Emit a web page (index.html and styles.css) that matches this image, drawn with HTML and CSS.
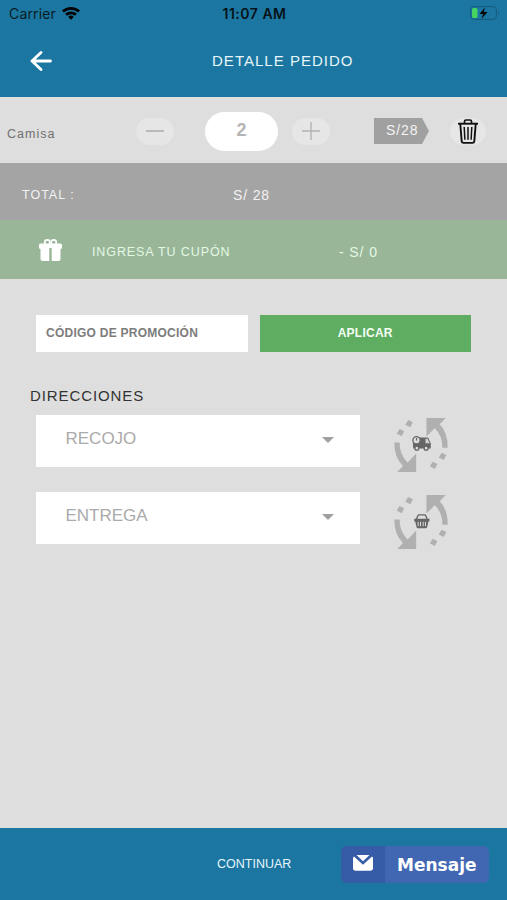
FILE: index.html
```html
<!DOCTYPE html>
<html lang="es">
<head>
<meta charset="utf-8">
<title>Detalle pedido</title>
<link rel="stylesheet" href="styles.css">
</head>
<body>
<div class="screen">
  <header class="header">
    <div class="status">
      <span class="carrier">Carrier
        <svg class="wifi" viewBox="0 0 18 14"><path d="M0 4.600A13 13 0 0 1 18 4.600L16.100 6.600A10.300 10.300 0 0 0 1.900 6.600ZM3.100 7.800A8.600 8.600 0 0 1 14.900 7.800L12.900 9.800A5.800 5.800 0 0 0 5.100 9.800ZM6.200 10.900A4 4 0 0 1 11.800 10.900L9 13.700Z"/></svg>
      </span>
      <span class="time">11:07 AM</span>
      <svg class="battery" viewBox="0 0 30 14"><rect x=".6" y=".6" width="25.800" height="12.800" rx="3.500" fill="none" stroke="#155a7b" stroke-width="1"/><path d="M28 5v4q2-2 0-4" fill="#155a7b"/><rect x="2" y="2" width="5.500" height="10" rx="1.500" fill="#46d35f"/><path d="M15 1.500 9.500 8h3.600l-1.500 4.800L17.500 6h-3.800z" fill="#000"/></svg>
    </div>
    <div class="nav">
      <svg class="back" viewBox="0 0 22 20"><path d="M20.500 10H2M11 1.500 2 10l9 8.500" fill="none" stroke="#fff" stroke-width="2.800" stroke-linecap="round" stroke-linejoin="round"/></svg>
      <h1>DETALLE PEDIDO</h1>
    </div>
  </header>

  <section class="item">
    <span class="name">Camisa</span>
    <button class="round" aria-label="Menos"><svg viewBox="0 0 18 18"><path d="M0 9h18" stroke="#afafaf" stroke-width="1.600"/></svg></button>
    <span class="qty">2</span>
    <button class="round" aria-label="Más"><svg viewBox="0 0 18 18"><path d="M0 9h18M9 0v18" stroke="#b3b3b3" stroke-width="1.400"/></svg></button>
    <span class="price">S/28</span>
    <button class="round trash" aria-label="Eliminar"><svg viewBox="0 0 20 25"><g fill="none" stroke="#111" stroke-linejoin="round"><path d="M0 4.700h20" stroke-width="1.900"/><path d="M6.500 4V2.400Q6.500 1 8 1h4q1.500 0 1.500 1.400V4" stroke-width="1.700"/><path d="M2.300 5l1.400 17.300q.2 1.600 1.800 1.600h9q1.600 0 1.800-1.600L17.700 5" stroke-width="1.900"/><path d="M6.200 8l.7 12.800M10 8v12.800M13.800 8l-.7 12.800" stroke-width="1.500"/></g></svg></button>
  </section>

  <section class="total"><span>TOTAL :</span><span>S/ 28</span></section>

  <section class="coupon">
    <svg class="gift" viewBox="0 0 23 22"><path d="M1.500 4.500H21.500Q23 4.500 23 6V8.500Q23 10 21.500 10V20Q21.500 22 19.500 22H12.700V9H10.300V22H3.500Q1.500 22 1.500 20V10Q0 10 0 8.500V6Q0 4.500 1.500 4.500Z" fill="#fff"/><g fill="none" stroke="#fff" stroke-width="1.700"><circle cx="8.300" cy="3.500" r="2.600"/><circle cx="14.700" cy="3.500" r="2.600"/></g></svg>
    <span>INGRESA TU CUPÓN</span><span>- S/ 0</span>
  </section>

  <main class="main">
    <div class="promo">
      <div class="code">CÓDIGO DE PROMOCIÓN</div>
      <button class="apply">APLICAR</button>
    </div>
    <h2>DIRECCIONES</h2>
    <div class="address">
      <div class="select"><span>RECOJO</span><i class="caret"></i></div>
      <svg class="cycle" viewBox="421 353 163 163">
        <g fill="#b0b0b0"><path d="M519 353H577L559 372Q584 398 583 443H567Q568 407 544 384L519 409Z"/><path d="M488 516H431L448 498Q421 471 422 427H438Q437 463 462 487L488 460Z"/><path d="M464 359l14 7-8 15-15-8zM438 386l14 7-8 15-15-8zM565 458l14 7-8 15-15-8zM538 485l14 7-8 15-15-8z"/></g>
        <path d="M478 426L498 412H524L532 430V445H479Z" fill="#666"/><path d="M516 416h6l7 13h-13z" fill="#d2d2d2"/><g fill="#ddd" stroke="#666" stroke-width="4"><circle cx="489" cy="420" r="11"/><circle cx="490" cy="444" r="6"/><circle cx="518" cy="444" r="6"/></g><path d="M489 413v8" fill="none" stroke="#666" stroke-width="3.500"/>
      </svg>
    </div>
    <div class="address">
      <div class="select"><span>ENTREGA</span><i class="caret"></i></div>
      <svg class="cycle" viewBox="421 353 163 163">
        <g fill="#b0b0b0"><path d="M519 353H577L559 372Q584 398 583 443H567Q568 407 544 384L519 409Z"/><path d="M488 516H431L448 498Q421 471 422 427H438Q437 463 462 487L488 460Z"/><path d="M464 359l14 7-8 15-15-8zM438 386l14 7-8 15-15-8zM565 458l14 7-8 15-15-8zM538 485l14 7-8 15-15-8z"/></g>
        <path d="M488 428l5-12q1-3 4-3h16q3 0 4 3l5 12" fill="none" stroke="#666" stroke-width="4"/><path d="M482 425H528V433H525L521 450Q520 453 517 453H493Q490 453 489 450L485 433H482Z" fill="#666"/><path d="M494 434v13M501 434v13M509 434v13M516 434v13" stroke="#ddd" stroke-width="3"/>
      </svg>
    </div>
  </main>

  <footer class="footer">
    <span class="continue">CONTINUAR</span>
    <button class="message">
      <span class="mail"><svg viewBox="0 0 20 16"><path d="M3.500 0h13L10 6.300zM1 1.500l9 8.300 9-8.300q1 .5 1 1.500v10q0 2.700-2.700 2.700H2.700Q0 15.700 0 13V3q0-1 1-1.500z" fill="#fff"/></svg></span>
      <span class="label">Mensaje</span>
    </button>
  </footer>
</div>
</body>
</html>
```
FILE: styles.css
```css
* { box-sizing: border-box; }
body { margin: 0; font-family: "Liberation Sans", Arial, sans-serif; background: #dedede; }
h1, h2 { margin: 0; font-weight: 400; }
button { border: 0; padding: 0; font: inherit; }
svg { display: block; flex: none; }
span { white-space: nowrap; }
.screen { width: 507px; height: 900px; display: flex; flex-direction: column; overflow: hidden; }

.header { height: 97px; background: #1b77a1; }
.status { height: 28px; display: grid; grid-template-columns: 1fr auto 1fr; align-items: center; padding: 0 7px 0 9px; font: 14px/28px Inter, sans-serif; color: #0a1c26; }
.carrier { display: flex; align-items: center; gap: 6px; letter-spacing: .15px; }
.wifi { width: 18px; height: 14px; fill: #000; margin-top: -2px; }
.time { font-weight: 600; font-size: 14px; letter-spacing: .5px; color: #061219; }
.battery { width: 30px; height: 14px; justify-self: end; margin-top: -2px; }
.nav { height: 66px; display: flex; align-items: center; padding-left: 30px; }
.back { width: 22px; height: 20px; }
.nav h1 { margin: -2px 0 0 160px; font-size: 15px; letter-spacing: 1.02px; color: #e8f5fb; }

.item { height: 66px; display: flex; align-items: center; padding: 2px 0 0 7px; }
.name { width: 129px; padding-top: 5px; font-size: 12.5px; letter-spacing: 1px; color: #707070; }
.round { width: 38px; height: 27px; border-radius: 14px; background: #e6e6e6; display: flex; align-items: center; justify-content: center; }
.round svg { width: 18px; height: 18px; }
.qty { width: 73px; height: 39px; margin: 0 14px 0 31px; border-radius: 20px; background: #fff; color: #b5b5b5; font-weight: 700; font-size: 18px; line-height: 37px; text-align: center; }
.price { width: 55px; height: 26px; margin-left: 44px; padding-left: 12px; background: #a0a0a0; clip-path: polygon(0 0, 48px 0, 100% 50%, 48px 100%, 0 100%); color: #f3f3f3; font-size: 14px; letter-spacing: .9px; line-height: 25px; }
.round.trash { width: 36px; margin-left: 21px; }
.round.trash svg { width: 20px; height: 25px; }

.total { height: 57px; background: #a4a4a4; display: flex; align-items: center; padding: 7px 0 0 22px; font-size: 12.5px; letter-spacing: 1px; color: #f2f2f2; }
.total span:first-child { width: 211px; }
.total span:last-child { font-size: 14px; letter-spacing: .85px; }
.coupon { height: 59px; background: #99b699; display: flex; align-items: center; padding-left: 39px; font-size: 12.5px; letter-spacing: .9px; color: #e4f8e4; }
.gift { width: 23px; height: 22px; }
.coupon span { width: 247px; margin-left: 30px; padding-top: 4px; }
.coupon span:last-child { width: auto; margin-left: 0; font-size: 14px; }

.main { flex: 1; padding: 36px 36px 0; }
.promo { display: flex; gap: 12px; font-size: 12px; font-weight: 700; line-height: 36px; }
.code { width: 212px; height: 37px; padding-left: 10px; background: #fff; color: #7c7c7c; letter-spacing: .25px; }
.apply { width: 212px; height: 37px; padding-bottom: 1px; background: #5ead60; color: #f6fff6; letter-spacing: .25px; }
.main h2 { margin: 34px 0 8px -6px; height: 21px; line-height: 20px; font-size: 15px; letter-spacing: .9px; color: #333; }
.address { display: flex; align-items: flex-start; height: 77px; }
.select { width: 324px; height: 52px; padding: 0 26px 5px 29.5px; background: #fff; display: flex; align-items: center; justify-content: space-between; font-size: 17px; color: #aaa; }
.caret { border: 6px solid transparent; border-top: 6px solid #a0a0a0; border-bottom: 0; margin-top: 3px; }
.cycle { width: 54px; height: 54px; margin: 3px 0 0 34px; }

.footer { height: 72px; background: #1b77a1; display: flex; align-items: center; padding-left: 217px; }
.continue { width: 124px; font-size: 12.5px; color: #e7f5fb; }
.message { width: 148px; height: 37px; border-radius: 6px; overflow: hidden; background: #4267b2; display: flex; }
.mail { width: 44px; height: 37px; padding: 9px 0 0 12px; background: #365ba7; }
.mail svg { width: 20px; height: 16px; }
.label { padding-left: 12px; font: 700 17px/38px "DejaVu Sans", Verdana, sans-serif; color: #fff; }
```
